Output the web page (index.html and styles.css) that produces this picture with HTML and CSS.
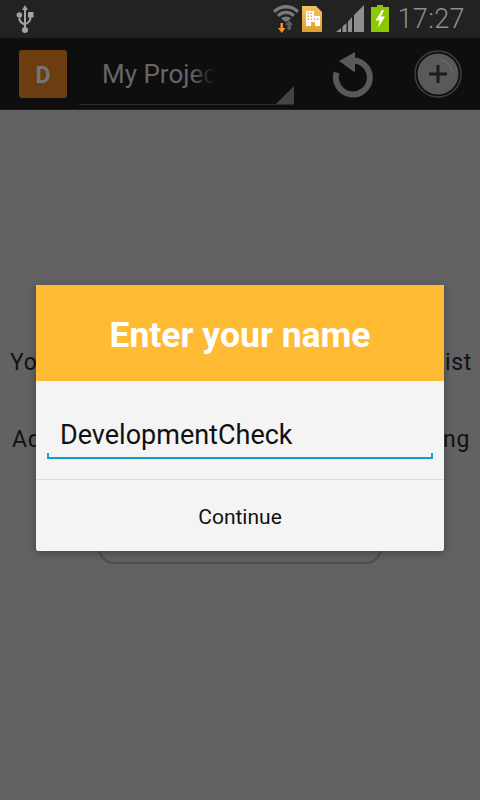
FILE: index.html
```html
<!DOCTYPE html>
<html lang="en">
<head>
<meta charset="utf-8">
<title>Enter your name</title>
<link rel="stylesheet" href="styles.css">
</head>
<body>
<div class="screen">
  <header class="status">
    <svg class="usb" width="18" height="28" viewBox="0 0 18 28">
      <path d="M9 0 L12 5 H10 V24 H8 V5 H6 Z" fill="#a3a3a3"/>
      <path d="M8.500 20.500 C4 18.500 2.500 17 2.500 13 H4.500 C4.500 16 6 17 8.500 18.300 Z" fill="#a3a3a3"/>
      <path d="M9.500 18 C12 16.800 13.500 15.500 13.500 12 H15.500 C15.500 16.500 13.500 18 9.500 20 Z" fill="#a3a3a3"/>
      <circle cx="3.400" cy="10" r="2.800" fill="#a3a3a3"/>
      <rect x="12" y="7" width="5.500" height="5.500" fill="#a3a3a3"/>
      <circle cx="9" cy="25" r="3" fill="#a3a3a3"/>
    </svg>
    <div class="status-right">
      <svg class="wifi" width="26" height="28" viewBox="0 0 26 28">
        <path d="M0 5.500 A18 18 0 0 1 26 5.500 L23.800 8 A15 15 0 0 0 2.200 8 Z" fill="#7a7a7a"/>
        <path d="M4 9.500 A12.500 12.500 0 0 1 22 9.500 L19.900 12 A9.500 9.500 0 0 0 6.100 12 Z" fill="#7a7a7a"/>
        <path d="M8 13.500 A7 7 0 0 1 18 13.500 L13 17 Z" fill="#7a7a7a"/>
        <path d="M16 15 L20 20 H18 V25 H14.500 V20 H12 Z" fill="#5c5c5c"/>
        <path d="M7.500 18 H10 V23 H12.500 L8.800 28 L5 23 H7.500 Z" fill="#f5932a"/>
      </svg>
      <svg class="sim" width="20" height="26" viewBox="0 0 20 26">
        <defs>
          <linearGradient id="simfill" x1="0" y1="0" x2="0" y2="1">
            <stop offset="0" stop-color="#efc566"/>
            <stop offset="1" stop-color="#e39f2c"/>
          </linearGradient>
        </defs>
        <path d="M0 0 H14 L20 6 V26 H0 Z" fill="url(#simfill)"/>
        <path d="M4 5 H12 V10 H18 V20 H13 V16 H9 V20 H4 Z" fill="#fff"/>
        <path d="M5.500 6.500 H7 V8 H5.500 Z M8.500 6.500 H10 V8 H8.500 Z M5.500 9.500 H7 V11 H5.500 Z M8.500 9.500 H10 V11 H8.500 Z M5.500 12.500 H7 V14 H5.500 Z M8.500 12.500 H10 V14 H8.500 Z M12 12.500 H13.500 V14 H12 Z M15 12.500 H16.500 V14 H15 Z" fill="#e8a93f"/>
      </svg>
      <svg class="signal" width="28" height="28" viewBox="0 0 28 28">
        <path d="M0 27 L5 23 V27 Z M6.500 21.500 L10.500 18 V27 H6.500 Z M12 16.500 L16 12 V27 H12 Z M18 10 L28 0 V27 H18 Z" fill="#8f8f8f"/>
      </svg>
      <svg class="battery" width="18" height="28" viewBox="0 0 18 28">
        <rect x="6" y="0" width="6" height="2.500" fill="#8cc800"/>
        <rect x="0" y="2" width="18" height="25" fill="#8cc800"/>
        <path d="M11 5 L4.500 15.500 H8.500 L7 23 L14 11.500 H10 L13 5 Z" fill="#fff"/>
      </svg>
      <span class="clock">17:27</span>
    </div>
  </header>
  <nav class="actionbar">
    <div class="logo">D</div>
    <div class="spinner">
      <span class="spinner-text">My Project</span>
      <span class="spinner-fade"></span>
      <span class="spinner-corner"></span>
    </div>
    <svg class="refresh" width="42" height="48" viewBox="0 0 42 48">
      <path d="M19 8.600 A17 17 0 1 1 4.600 20.500" fill="none" stroke="#595959" stroke-width="6"/>
      <path d="M7 9 L23 0 V20.500 Z" fill="#595959"/>
    </svg>
    <svg class="add" width="48" height="48" viewBox="0 0 48 48">
      <circle cx="24" cy="24" r="23" fill="none" stroke="#3f3f3f" stroke-width="1.500"/>
      <circle cx="24" cy="24" r="20.500" fill="#595959"/>
      <path d="M27 10 A14 14 0 0 1 38 22" fill="none" stroke="#737373" stroke-width="1"/>
      <path d="M24 15 V33 M15 24 H33" stroke="#1c1c1c" stroke-width="3"/>
    </svg>
  </nav>
  <main class="content">
    <p class="line">You will find your projects in this list</p>
    <p class="line line-second">Add a new project now to start working</p>
    <div class="ghost-button"></div>
  </main>
  <section class="dialog">
    <h1 class="dialog-title">Enter your name</h1>
    <div class="dialog-body">
      <div class="field">DevelopmentCheck</div>
    </div>
    <div class="dialog-action">Continue</div>
  </section>
</div>
</body>
</html>
```
FILE: styles.css
```css
* { box-sizing: border-box; }
html, body { margin: 0; padding: 0; }
body { width: 480px; height: 800px; overflow: hidden; font-family: Roboto, sans-serif; }
.screen { position: relative; width: 480px; height: 800px; background: #626262; display: flex; flex-direction: column; }

.status { height: 38px; background: #222; display: flex; align-items: center; justify-content: space-between; padding: 0 15px 0 16px; flex: none; }
.status-right { display: flex; align-items: center; }
.sim { margin-left: 3px; }
.signal { margin-left: 14px; }
.battery { margin-left: 7px; }
.clock { margin-left: 8px; font-size: 27px; color: #8e8e8e; line-height: 38px; font-weight: 300; letter-spacing: 0.4px; }

.actionbar { height: 72px; background: #0e0e0e; display: flex; align-items: center; padding: 0 18px 0 19px; flex: none; border-bottom: 1px solid #1c1c1c; }
.logo { width: 48px; height: 48px; padding-top: 4px; background: #6b3d10; border-radius: 3px; color: #757575; font-weight: 700; font-size: 23px; display: flex; align-items: center; justify-content: center; }
.spinner { position: relative; width: 215px; height: 54px; margin-left: 12px; border-bottom: 1px solid #2b2b2b; margin-top: 8px; }
.spinner-text { position: absolute; left: 23px; top: 8px; width: 112px; overflow: hidden; white-space: nowrap; font-size: 26px; line-height: 30px; color: #666; }
.spinner-fade { position: absolute; left: 112px; top: 8px; width: 24px; height: 32px; background: linear-gradient(to right, rgba(14,14,14,0), #0e0e0e); }
.spinner-corner { position: absolute; right: 0; bottom: 0; width: 0; height: 0; border-style: solid; border-width: 0 0 18px 18px; border-color: transparent transparent #444 transparent; }
.refresh { margin-left: 38px; margin-top: 4px; }
.add { margin-left: 40px; }

.content { flex: 1; padding: 240px 8px 0 10px; display: flex; flex-direction: column; align-items: stretch; }
.line { margin: 0; font-size: 23px; line-height: 26px; letter-spacing: 0.7px; color: #111; text-align: justify; text-align-last: justify; }
.line-second { margin: 51px 2px 0 2px; }
.ghost-button { width: 284px; height: 60px; margin: 51px 0 0 88px; border: 2px solid #4d4d4d; border-radius: 16px; }

.dialog { position: absolute; left: 36px; top: 285px; width: 408px; height: 266px; background: #f4f4f4; box-shadow: 0 2px 10px rgba(0,0,0,0.3); border-radius: 0 0 2px 2px; display: flex; flex-direction: column; }
.dialog-title { margin: 0; height: 96px; padding-top: 3px; background: #ffbb33; color: #fff; font-size: 35.5px; font-weight: 700; display: flex; align-items: center; justify-content: center; }
.dialog-body { height: 99px; padding: 45px 11px 0; border-bottom: 1px solid #dcdcdc; }
.field { height: 33px; padding: 0 11px; font-size: 27px; line-height: 18px; color: #111; border-style: solid; border-width: 0 2px 2px; border-image: linear-gradient(to top, #0e9fd0 6px, transparent 6px) 2; }
.dialog-action { flex: 1; padding-top: 3px; display: flex; align-items: center; justify-content: center; font-size: 21px; color: #111; }
```
